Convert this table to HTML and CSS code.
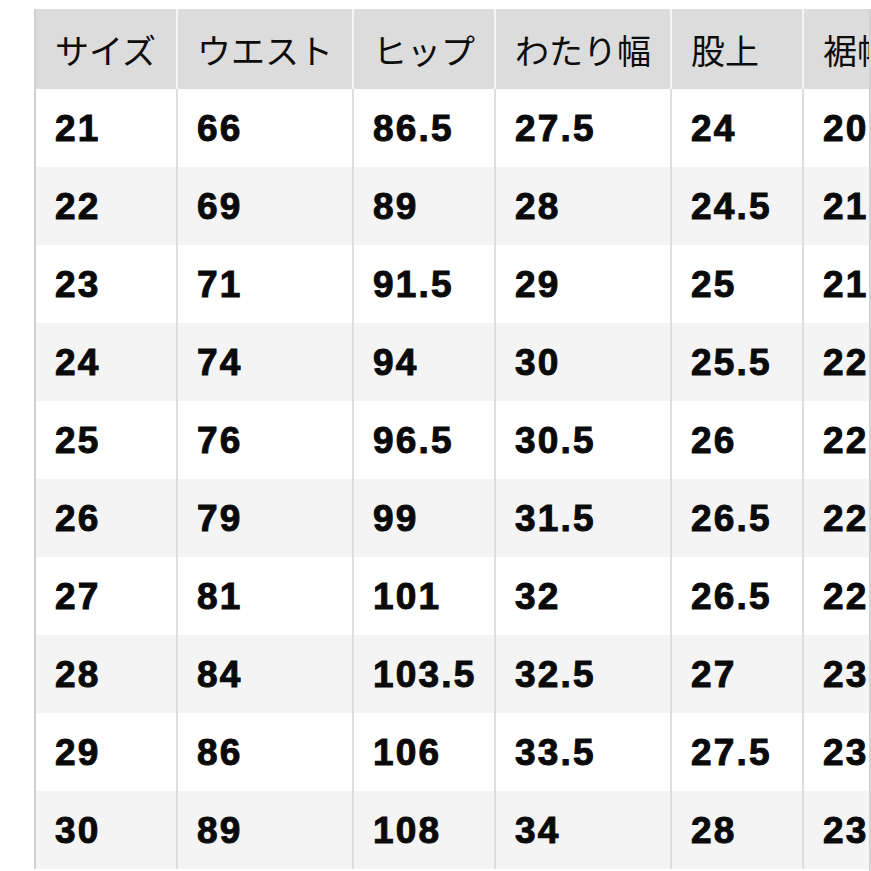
FILE: index.html
```html
<!DOCTYPE html>
<html lang="ja">
<head>
<meta charset="utf-8">
<link rel="stylesheet" href="styles.css">
</head>
<body>
<div class="frame">
<table class="size-table">
<colgroup>
<col class="c1"><col class="c2"><col class="c3"><col class="c4"><col class="c5"><col class="c6">
</colgroup>
<thead>
<tr><th>サイズ</th><th>ウエスト</th><th>ヒップ</th><th>わたり幅</th><th>股上</th><th>裾幅</th></tr>
</thead>
<tbody>
<tr><td>21</td><td>66</td><td>86.5</td><td>27.5</td><td>24</td><td>20</td></tr>
<tr><td>22</td><td>69</td><td>89</td><td>28</td><td>24.5</td><td>21</td></tr>
<tr><td>23</td><td>71</td><td>91.5</td><td>29</td><td>25</td><td>21.5</td></tr>
<tr><td>24</td><td>74</td><td>94</td><td>30</td><td>25.5</td><td>22</td></tr>
<tr><td>25</td><td>76</td><td>96.5</td><td>30.5</td><td>26</td><td>22</td></tr>
<tr><td>26</td><td>79</td><td>99</td><td>31.5</td><td>26.5</td><td>22</td></tr>
<tr><td>27</td><td>81</td><td>101</td><td>32</td><td>26.5</td><td>22</td></tr>
<tr><td>28</td><td>84</td><td>103.5</td><td>32.5</td><td>27</td><td>23</td></tr>
<tr><td>29</td><td>86</td><td>106</td><td>33.5</td><td>27.5</td><td>23</td></tr>
<tr><td>30</td><td>89</td><td>108</td><td>34</td><td>28</td><td>23</td></tr>
</tbody>
</table>
</div>
</body>
</html>
```
FILE: styles.css
```css
html, body {
  margin: 0;
  padding: 0;
  background: #ffffff;
  overflow: hidden;
}
body {
  width: 871px;
  height: 871px;
}
.frame {
  margin: 9px 0 0 34px;
  width: 835px;
  height: 862px;
  overflow: hidden;
  border-right: 2px solid #d2d2d2;
}
.size-table {
  border-collapse: collapse;
  table-layout: fixed;
  width: 907px;
  color: #111111;
}
.c1 { width: 142px; }
.c2 { width: 176px; }
.c3 { width: 142px; }
.c4 { width: 176px; }
.c5 { width: 132px; }
.c6 { width: 139px; }
.size-table th,
.size-table td {
  padding: 0 0 0 19px;
  text-align: left;
  white-space: nowrap;
  overflow: hidden;
  vertical-align: middle;
}
.size-table th {
  height: 80px;
  background: #dcdcdc;
  font-family: "Noto Sans CJK JP", "Noto Sans", sans-serif;
  font-weight: 400;
  font-size: 34px;
  border-left: 2px solid #f4f4f4;
  color: #0d0d0d;
}
.size-table th:first-child {
  border-left: 2px solid #d0d0d0;
}
.size-table td {
  height: 76px;
  padding-top: 2px;
  font-family: "Liberation Sans", Arial, sans-serif;
  font-weight: 700;
  font-size: 37px;
  letter-spacing: 2.2px;
  -webkit-text-stroke: 1px #0a0a0a;
  color: #0a0a0a;
  border-left: 2px solid #dedede;
}
.size-table td:first-child {
  border-left: 2px solid #d0d0d0;
}
.size-table tbody tr:nth-child(odd) td {
  background: #ffffff;
}
.size-table tbody tr:nth-child(even) td {
  background: #f4f4f4;
}
```
